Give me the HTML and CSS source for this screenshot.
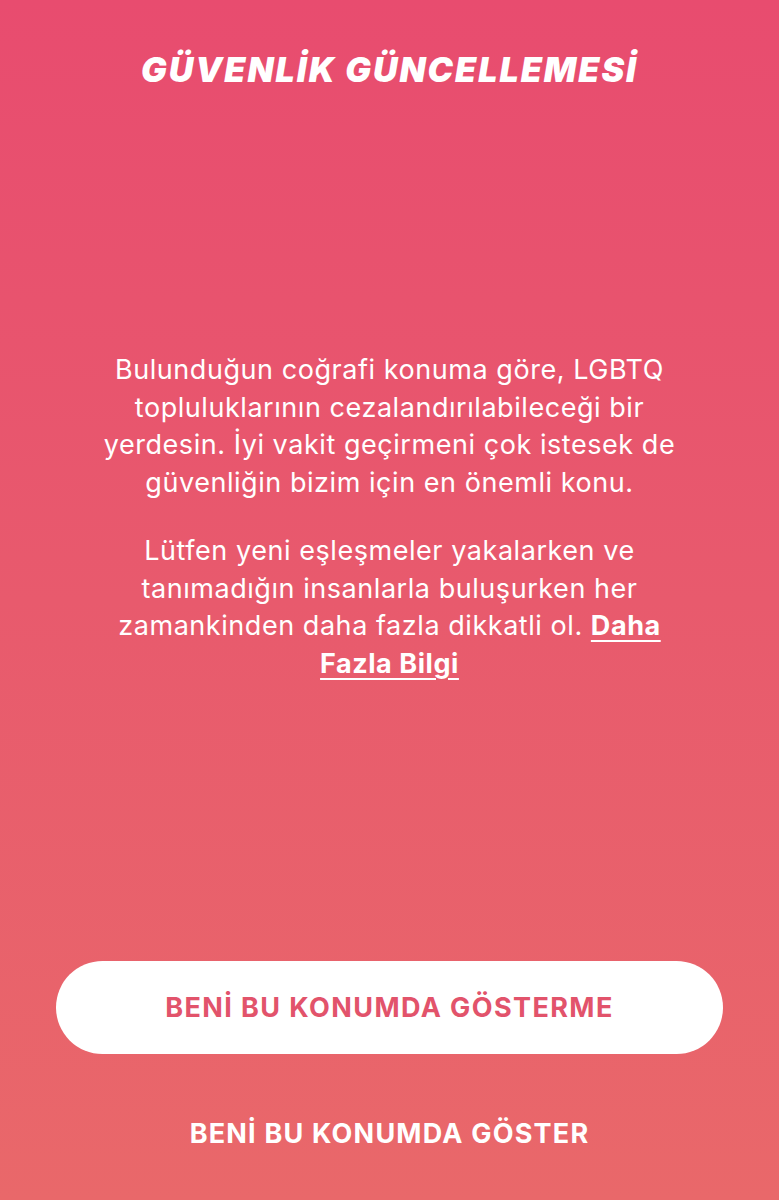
FILE: index.html
```html
<!DOCTYPE html>
<html lang="tr">
<head>
<meta charset="utf-8">
<link rel="stylesheet" href="styles.css">
</head>
<body>
<div class="screen">
  <header class="header">
    <h1 class="title">GÜVENLİK GÜNCELLEMESİ</h1>
  </header>
  <main class="main">
    <p class="para">Bulunduğun coğrafi konuma göre, LGBTQ<br>topluluklarının cezalandırılabileceği bir<br>yerdesin. İyi vakit geçirmeni çok istesek de<br>güvenliğin bizim için en önemli konu.</p>
    <p class="para">Lütfen yeni eşleşmeler yakalarken ve<br>tanımadığın insanlarla buluşurken her<br>zamankinden daha fazla dikkatli ol. <a class="link" href="#">Daha<br>Fazla Bilgi</a></p>
  </main>
  <footer class="footer">
    <button class="btn-primary">BENİ BU KONUMDA GÖSTERME</button>
    <button class="btn-text">BENİ BU KONUMDA GÖSTER</button>
  </footer>
</div>
</body>
</html>
```
FILE: styles.css
```css
* { box-sizing: border-box; }
html, body { margin: 0; padding: 0; }
body {
  font-family: "Inter", "Lato", sans-serif;
  color: #fff;
}
.screen {
  width: 779px;
  height: 1200px;
  display: flex;
  flex-direction: column;
  background: linear-gradient(180deg, #E84C6F 0%, #E85A6D 50%, #E9686A 100%);
}
.header {
  padding-top: 48px;
  display: flex;
  justify-content: center;
}
.title {
  margin: 0;
  font-size: 34px;
  line-height: 44px;
  font-weight: 900;
  font-style: italic;
  letter-spacing: 2px;
}
.main {
  flex: 1;
  display: flex;
  flex-direction: column;
  align-items: center;
  justify-content: center;
  gap: 31px;
  padding: 0 20px 20px;
}
.para {
  margin: 0;
  text-align: center;
  font-size: 27px;
  line-height: 37.5px;
  font-weight: 400;
  letter-spacing: 0.55px;
  white-space: nowrap;
}
.link {
  color: #fff;
  font-weight: 700;
  text-decoration: underline;
  text-decoration-thickness: 2px;
  text-underline-offset: 5px;
}
.footer {
  display: flex;
  flex-direction: column;
  align-items: center;
  padding: 0 56px 47px;
}
.btn-primary {
  width: 100%;
  height: 93px;
  border: none;
  border-radius: 47px;
  background: #fff;
  color: #E2536B;
  font-family: inherit;
  font-size: 27px;
  font-weight: 700;
  letter-spacing: 1.4px;
}
.btn-text {
  margin-top: 59px;
  height: 40px;
  border: none;
  background: transparent;
  color: #fff;
  font-family: inherit;
  font-size: 27px;
  font-weight: 700;
  letter-spacing: 1.2px;
  padding: 0;
}
```
